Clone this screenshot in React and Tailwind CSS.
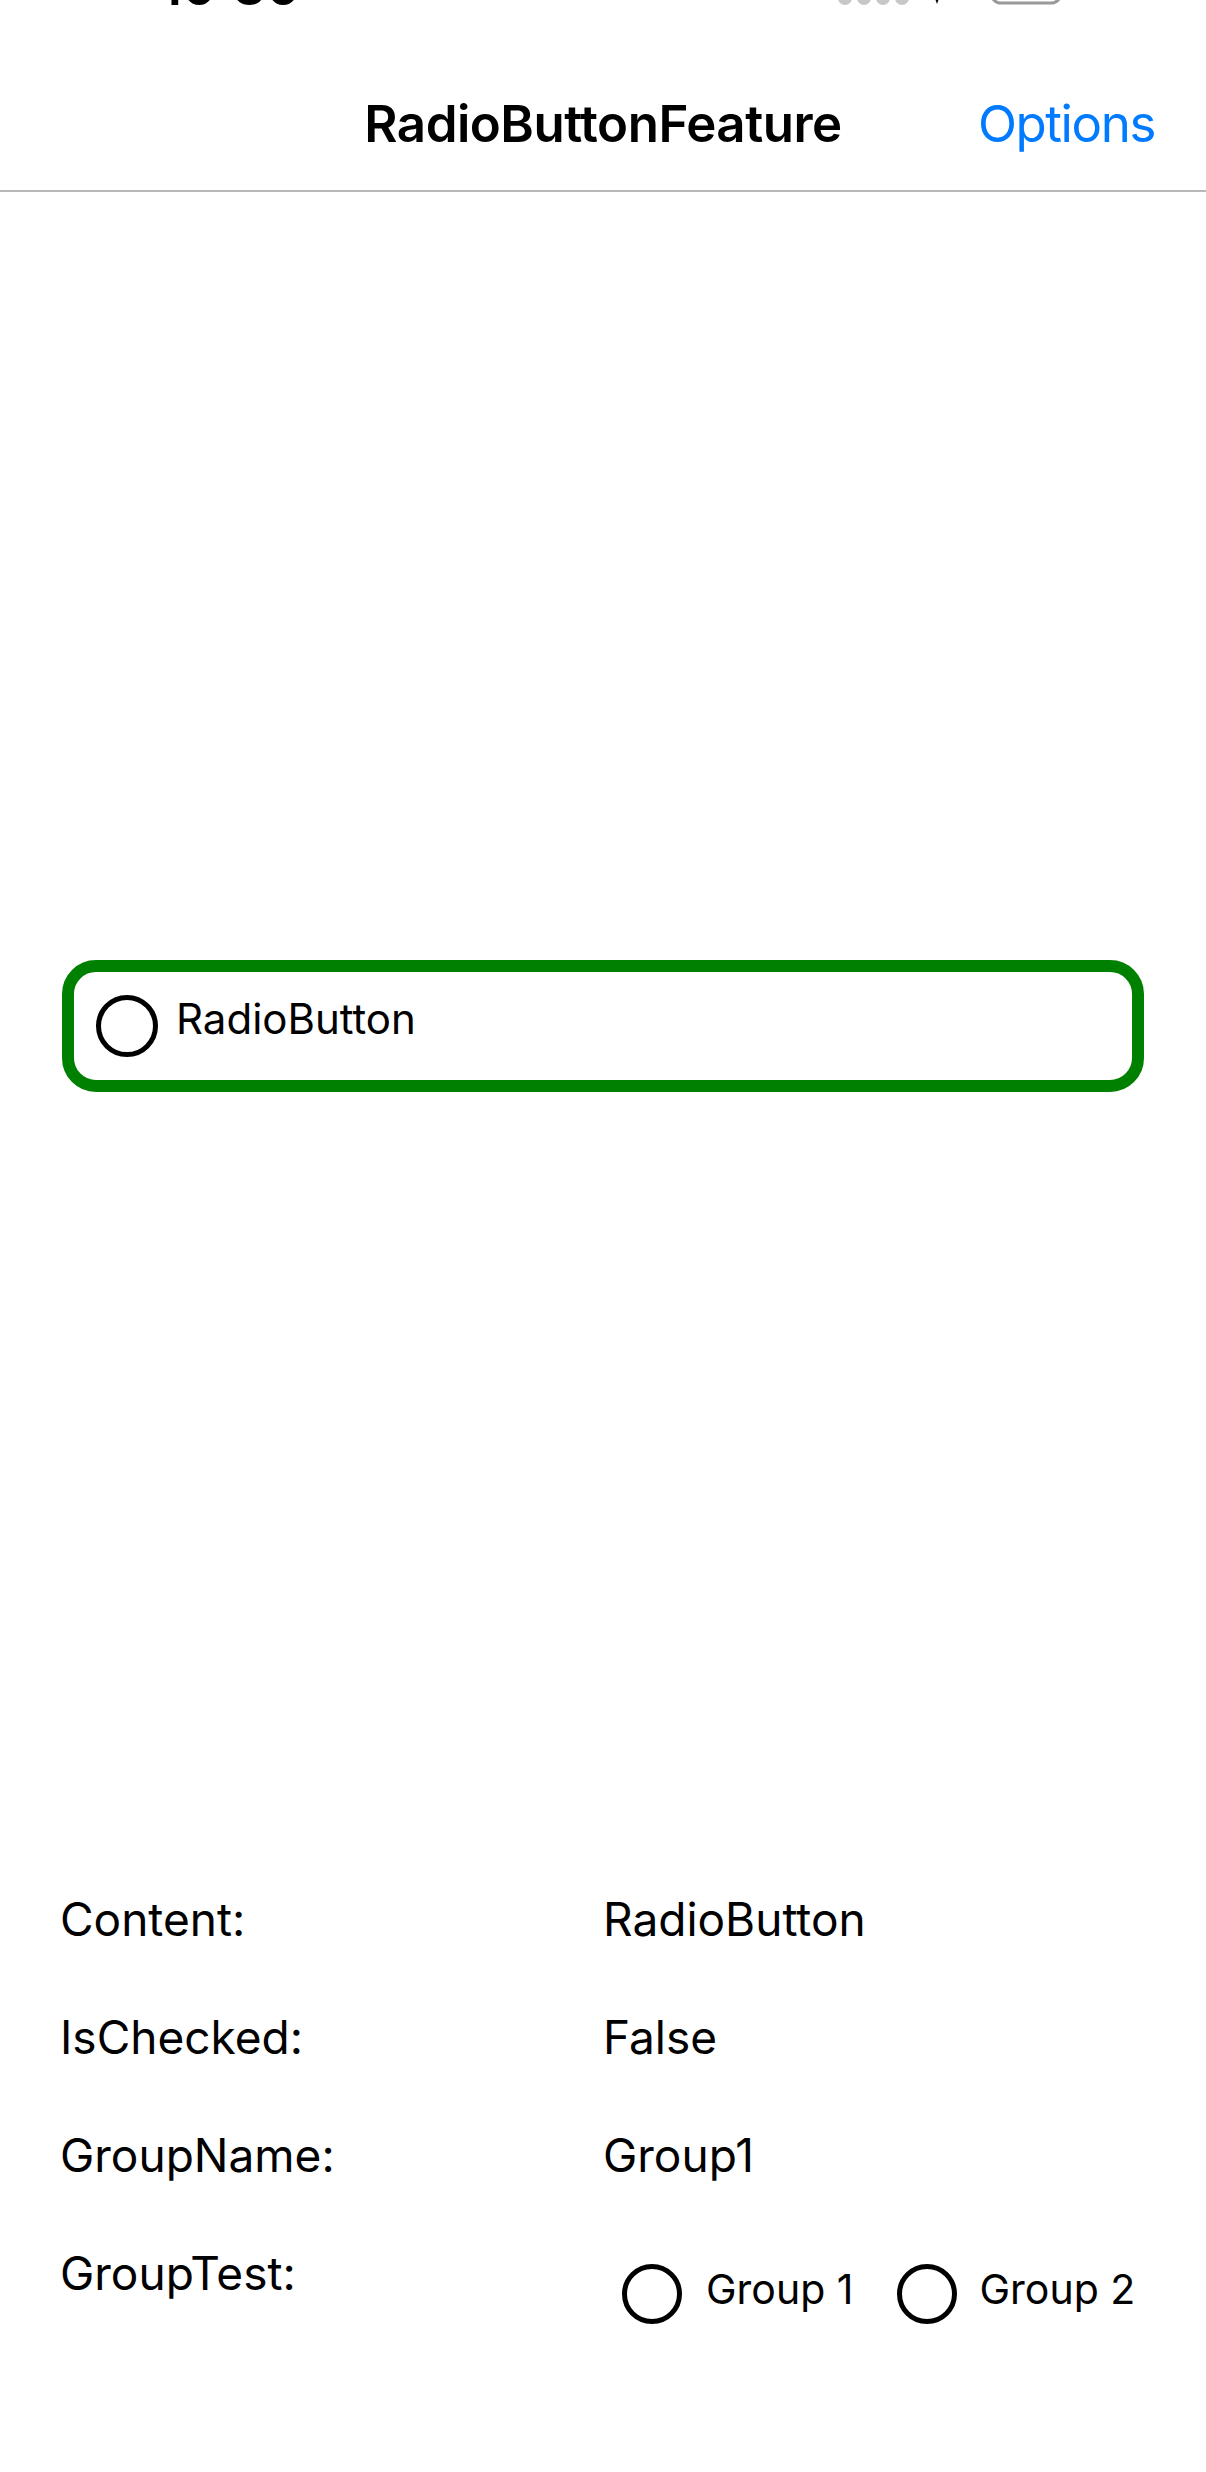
import React from "react";

const font = { fontFamily: "Inter, 'Noto Sans', sans-serif" };

function Radio({ size = "w-[62px] h-[62px]" }) {
  return <div className={`${size} rounded-full border-[5px] border-black shrink-0`} />;
}

function StatusBar() {
  return (
    <div className="h-[12px] overflow-hidden flex items-end justify-between">
      <span className="ml-[160px] text-[52px] font-semibold leading-none text-black mb-[-1px]">10:30</span>
      {/* signal, wifi, battery: only their bottoms show */}
      <svg width="260" height="12" viewBox="0 0 260 12" className="mr-[110px]">
        <circle cx="9" cy="-2" r="7" fill="#c8c8c8" />
        <circle cx="28" cy="-2" r="7" fill="#c8c8c8" />
        <circle cx="47" cy="-2" r="7" fill="#c8c8c8" />
        <circle cx="66" cy="-2" r="7" fill="#c8c8c8" />
        <path d="M96 -10 L106 -10 L101 4 Z" fill="#000" />
        <rect x="155" y="-30" width="70" height="33" rx="10" fill="none" stroke="#999" strokeWidth="3" />
      </svg>
    </div>
  );
}

const rows = [
  ["Content:", "RadioButton"],
  ["IsChecked:", "False"],
  ["GroupName:", "Group1"],
];

export default function App() {
  return (
    <div className="w-[1206px] h-[2472px] bg-white text-black overflow-hidden" style={font}>
      <StatusBar />

      {/* nav bar */}
      <div className="h-[180px] border-b-2 border-[#b8b8b8] relative flex justify-center pt-[86px]">
        <span className="text-[51px] font-semibold leading-none tracking-[-0.5px]">RadioButtonFeature</span>
        <span className="absolute right-[51px] top-[86px] text-[51px] leading-none tracking-[-1.4px] text-[#007aff]">Options</span>
      </div>

      {/* radio area */}
      <div className="h-[1668px] flex items-center px-[62px]">
        <div className="w-full h-[132px] border-[12px] border-[#008000] rounded-[34px] flex items-center pl-[22px] gap-[18px]">
          <Radio />
          <span className="text-[42px] leading-none mb-[14px]">RadioButton</span>
        </div>
      </div>

      {/* properties */}
      <div className="grid grid-cols-2 px-[60px] text-[46px]">
        {rows.map(([k, v]) => (
          <React.Fragment key={k}>
            <div className="h-[118px] leading-[118px]">{k}</div>
            <div className="h-[118px] leading-[118px]">{v}</div>
          </React.Fragment>
        ))}
        <div className="leading-[118px]">GroupTest:</div>
        <div className="flex items-center h-[62px] mt-[49px] pl-[19px]">
          <Radio size="w-[60px] h-[60px]" />
          <span className="ml-[24px] text-[41px] leading-none mb-[10px]">Group 1</span>
          <div className="ml-[44px]">
            <Radio size="w-[60px] h-[60px]" />
          </div>
          <span className="ml-[22px] text-[41px] leading-none mb-[10px]">Group 2</span>
        </div>
      </div>
    </div>
  );
}
